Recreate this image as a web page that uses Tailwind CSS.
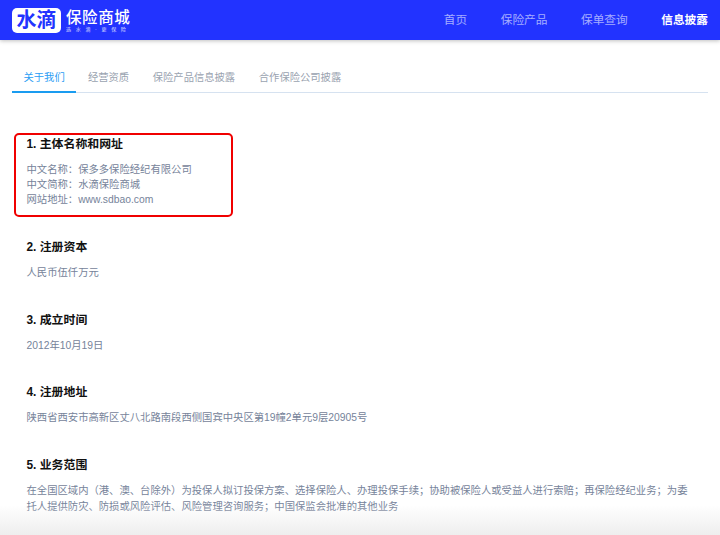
<!DOCTYPE html>
<html lang="zh-CN">
<head>
  <meta charset="UTF-8" />
  <title>信息披露</title>
  <script src="https://cdn.jsdelivr.net/npm/@tailwindcss/browser@4"></script>
</head>
<body class="bg-white font-['Liberation_Sans','Noto_Sans_CJK_SC',sans-serif] overflow-hidden">
  <div class="relative h-[535px] w-[720px] overflow-hidden">
    <!-- Header -->
    <header class="h-10 bg-[#2233ff] shadow-[0_1px_4px_rgba(0,0,0,0.25)] flex items-center justify-between pl-3 pr-3">
      <div class="flex items-center gap-[5px]">
        <div class="w-[49px] h-[25px] bg-white rounded-[5px] flex items-center justify-center text-[#2233ff] text-[20px] font-bold leading-none">水滴</div>
        <div class="text-white flex flex-col items-start">
          <div class="text-[15.5px] leading-[17px] tracking-[0.6px] font-medium">保险商城</div>
          <div class="text-[5px] leading-[6px] tracking-[4.7px] opacity-80 whitespace-nowrap">选水滴·更保险</div>
        </div>
      </div>
      <nav class="flex items-center gap-[33.5px] text-[11.7px] text-white/60 -mt-[1px]">
        <a>首页</a>
        <a>保险产品</a>
        <a>保单查询</a>
        <a class="text-white font-bold">信息披露</a>
      </nav>
    </header>

    <!-- Tabs -->
    <div class="mx-3 mt-[29px] h-[24px] flex gap-[23.7px] border-b border-[#d6e2f0] text-[10.3px] text-[#9aa3b0]">
      <div class="px-[11.5px] -mr-3 h-[24px] text-[#2a9df4] border-b-2 border-[#1a9cf0] leading-[17px]">关于我们</div>
      <div class="leading-[17px] ml-0">经营资质</div>
      <div class="leading-[17px]">保险产品信息披露</div>
      <div class="leading-[17px]">合作保险公司披露</div>
    </div>

    <!-- Content -->
    <main class="px-[26.5px] pt-[43px] flex flex-col gap-[31.8px] text-[10.34px] leading-[15px] text-[#76839a]">
      <section>
        <h2 class="text-[11.9px] leading-[16px] font-bold text-[#111] mb-[10px]">1. 主体名称和网址</h2>
        <p>中文名称：保多多保险经纪有限公司</p>
        <p>中文简称：水滴保险商城</p>
        <p>网站地址：www.sdbao.com</p>
      </section>
      <section>
        <h2 class="text-[11.9px] leading-[16px] font-bold text-[#111] mb-[10px]">2. 注册资本</h2>
        <p>人民币伍仟万元</p>
      </section>
      <section>
        <h2 class="text-[11.9px] leading-[16px] font-bold text-[#111] mb-[10px]">3. 成立时间</h2>
        <p>2012年10月19日</p>
      </section>
      <section>
        <h2 class="text-[11.9px] leading-[16px] font-bold text-[#111] mb-[10px]">4. 注册地址</h2>
        <p>陕西省西安市高新区丈八北路南段西侧国宾中央区第19幢2单元9层20905号</p>
      </section>
      <section>
        <h2 class="text-[11.9px] leading-[16px] font-bold text-[#111] mb-[10px]">5. 业务范围</h2>
        <p class="leading-[16px]">在全国区域内（港、澳、台除外）为投保人拟订投保方案、选择保险人、办理投保手续；协助被保险人或受益人进行索赔；再保险经纪业务；为委托人提供防灾、防损或风险评估、风险管理咨询服务；中国保监会批准的其他业务</p>
      </section>
    </main>

    <!-- Red annotation box -->
    <div class="absolute left-[14px] top-[133px] w-[219px] h-[84px] border-2 border-[#f00000] rounded-[5px]"></div>
    <!-- Bottom fade -->
    <div class="absolute left-0 right-0 bottom-0 h-[30px] bg-gradient-to-b from-white/0 to-[#eeeeee]"></div>
  </div>
</body>
</html>
